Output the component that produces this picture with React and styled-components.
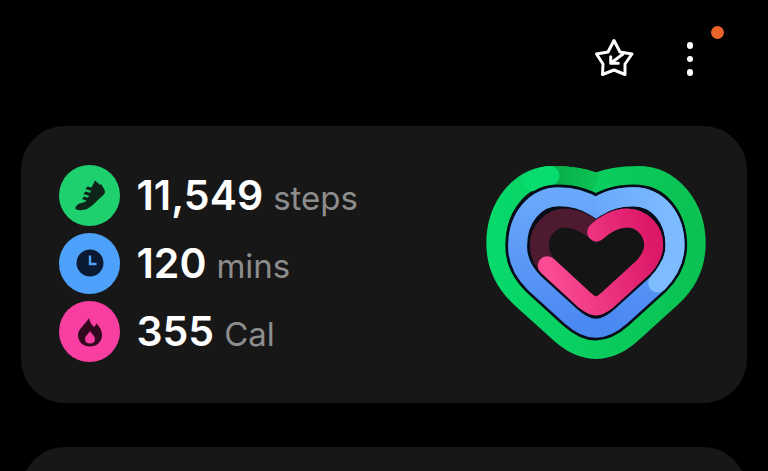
import React from 'react';
import styled, { createGlobalStyle } from 'styled-components';

const Global = createGlobalStyle`
  html, body { margin: 0; padding: 0; background: #000; width: 768px; height: 471px; overflow: hidden; }
  #root { width: 768px; height: 471px; overflow: hidden; }
`;
const Page = styled.div`
  width: 768px; height: 471px; background: #000; overflow: hidden;
  display: flex; flex-direction: column; font-family: Inter, Roboto, sans-serif;
`;
const Toolbar = styled.div`
  height: 126px; flex: none; box-sizing: border-box; padding: 38px 0 0 594px;
  display: flex; align-items: flex-start;
`;
const MenuButton = styled.div`
  position: relative; margin-left: 30px; width: 50px; height: 50px;
  display: flex; flex-direction: column; align-items: center; padding-top: 4px; gap: 7px; box-sizing: border-box;
`;
const Dot = styled.span`
  width: 6.5px; height: 6.5px; border-radius: 50%; background: #fff;
`;
const Badge = styled.span`
  position: absolute; left: 46px; top: -12px; width: 13px; height: 13px; border-radius: 50%; background: #e9642a;
`;
const Card = styled.section`
  flex: none; margin: 0 21px; height: ${p => p.$h}px; background: #171717; border-radius: 44px;
  box-sizing: border-box; display: flex; justify-content: space-between; padding: 24px 27px 33px 38px;
`;
const Gap = styled.div`height: 44px; flex: none;`;
const Stats = styled.div`
  display: flex; flex-direction: column; gap: 7.7px; padding-top: 15px;
`;
const Row = styled.div`display: flex; align-items: center; gap: 16.5px; height: 60.5px;`;
const Circle = styled.div`
  width: 61px; height: 60.5px; border-radius: 50%; background: ${p => p.$c};
  display: flex; align-items: center; justify-content: center;
`;
const Reading = styled.div`display: flex; align-items: baseline; gap: 10px; margin-top: -1px;`;
const Value = styled.span`
  font-size: 41px; font-weight: 600; color: #fff;
`;
const Unit = styled.span`
  font-size: 33px; font-weight: 400; color: #8d8d8d;
`;
const Heart = styled.svg`display: block; flex: none;`;

const outer = 'M378 98 C420 80 460 77 505 77 C605 77 678 170 678 280 C678 350 650 400 606 441 L480 555 C445 585 415 598 378 598 C341 598 311 585 276 555 L150 441 C106 400 78 350 78 280 C78 170 150 77 250 77 C295 77 335 80 378 98 Z';
const mid = 'M378 172 C410 150 450 140 490 140 C565 140 615 205 615 285 C615 330 597 365 563 399 L453 499 C425 524 402 535 378 535 C354 535 331 524 303 499 L193 399 C159 365 141 330 143 285 C143 205 195 140 265 140 C305 140 345 150 378 172 Z';
const inner = 'M378 243 C405 222 440 204 470 204 C520 204 551 245 551 285 C551 310 540 330 520 352 L410 452 C395 464 388 468 378 468 C368 468 361 464 346 452 L236 352 C216 330 208 310 208 285 C208 245 240 204 285 204 C320 204 350 222 378 243 Z';

const App = () => (
  <Page>
    <Global />
    <Toolbar>
      <svg width="41" height="40" viewBox="0 0 41 40" fill="none" stroke="#fff" strokeLinejoin="round" strokeLinecap="round" strokeWidth="3">
        <path d="M20 2.5 L26 14 L38 16 L31 26 L31 36.5 L20 32 L8.5 36.5 L9 26 L2.5 16 L14 14 Z" />
        <path d="M29 16 L17 25 M16.7 18.7 L16.7 25.3 L24.3 25.3" />
      </svg>
      <MenuButton>
        <Dot /><Dot /><Dot />
        <Badge />
      </MenuButton>
    </Toolbar>
    <Card $h={277}>
      <Stats>
        <Row>
          <Circle $c="#1fd06e">
            <svg width="32" height="32" viewBox="0 0 32 32" fill="#10251a">
              <path d="M21 1.5 L24.5 4.5 C25.5 6 26 6 27 5 C29 8 31 11 31 13 C31 15 28 17 25 20 C22 23 17 28 13 30 C9 31.5 3 31.5 1.5 30 C1 28 3 25.5 5.5 24.5 C8 23.5 11 23.5 12.5 21.5 L8 20 L10 17.5 L14 18.7 L15 16.7 L9.5 15 L11.5 12.5 L16 13.7 L17 11.7 L11.5 10 L13.5 7.5 L17.5 8.5 Z" />
            </svg>
          </Circle>
          <Reading><Value>11,549</Value><Unit>steps</Unit></Reading>
        </Row>
        <Row>
          <Circle $c="#4ea1fb">
            <svg width="32" height="32" viewBox="0 0 32 32">
              <circle cx="16" cy="16" r="13.5" fill="#0b1a33" />
              <path d="M16 8.5 V17 H22.5" fill="none" stroke="#4ea1fb" strokeWidth="2.4" />
            </svg>
          </Circle>
          <Reading><Value>120</Value><Unit>mins</Unit></Reading>
        </Row>
        <Row>
          <Circle $c="#f83ea1">
            <svg width="32" height="32" viewBox="0 0 32 32">
              <path d="M15 2 C16 7 18 9 20 11 C21 10 22 9 22.5 7.5 C26 11 28 15 28 19 C28 26 22.5 30.5 16 30.5 C9.5 30.5 4 26 4 19 C4 13 11 9 15 2 Z" fill="#33091f" />
              <path d="M16 15 C18 18.5 21 20 21 23 C21 26 19 27.5 16 27.5 C13 27.5 11 26 11 23 C11 20 14 18.5 16 15 Z" fill="#f83ea1" />
            </svg>
          </Circle>
          <Reading><Value>355</Value><Unit>Cal</Unit></Reading>
        </Row>
      </Stats>
      <Heart width="250" height="220" viewBox="0 0 750 660" fill="none" strokeLinejoin="miter" strokeMiterlimit="6">
        <defs>
          <linearGradient id="gr" gradientUnits="userSpaceOnUse" x1="78" y1="0" x2="678" y2="0">
            <stop offset="0" stopColor="#07d96a" />
            <stop offset="1" stopColor="#0bc252" />
          </linearGradient>
          <linearGradient id="gd" gradientUnits="userSpaceOnUse" x1="250" y1="0" x2="400" y2="0">
            <stop offset="0" stopColor="#0aae48" />
            <stop offset="1" stopColor="#0bc655" />
          </linearGradient>
          <linearGradient id="bl" x1="0" y1="0" x2="0" y2="1">
            <stop offset="0" stopColor="#69a8fb" />
            <stop offset="1" stopColor="#4a88f2" />
          </linearGradient>
          <linearGradient id="bl2" gradientUnits="userSpaceOnUse" x1="378" y1="0" x2="615" y2="0">
            <stop offset="0" stopColor="#69a8fb" />
            <stop offset="1" stopColor="#7dbcff" />
          </linearGradient>
          <linearGradient id="pk" x1="0" y1="0.5" x2="1" y2="0.3">
            <stop offset="0" stopColor="#fb4b95" />
            <stop offset="1" stopColor="#dc1868" />
          </linearGradient>
        </defs>
        <path d={outer} stroke="url(#gr)" strokeWidth="58" />
        <path d="M250 77 C295 77 335 80 378 98" stroke="url(#gd)" strokeWidth="58" />
        <path d="M190 95 C205 84 222 77 240 77" stroke="#08dc6e" strokeWidth="58" strokeLinecap="round" />
        <path d={mid} stroke="#080c18" strokeWidth="73" />
        <path d={inner} stroke="#080c18" strokeWidth="73" />
        <path d={mid} stroke="url(#bl)" strokeWidth="57" />
        <path d="M378 172 C410 150 450 140 490 140 C565 140 615 205 615 285 C615 330 597 365 563 399" stroke="url(#bl2)" strokeWidth="57" />
        <path d="M600 345 C590 365 580 382 563 399" stroke="#7dbcff" strokeWidth="57" strokeLinecap="round" />
        <path d={inner} fill="#141414" stroke="#4d1a30" strokeWidth="57" />
        <path d="M232 347 L346 452 C361 464 368 468 378 468 C388 468 395 464 410 452 L520 352 C540 330 551 310 551 285 C551 245 520 204 470 204 C440 204 405 222 380 246" stroke="url(#pk)" strokeWidth="57" strokeLinecap="round" strokeLinejoin="round" />
      </Heart>
    </Card>
    <Gap />
    <Card $h={120} />
  </Page>
);
export default App;
